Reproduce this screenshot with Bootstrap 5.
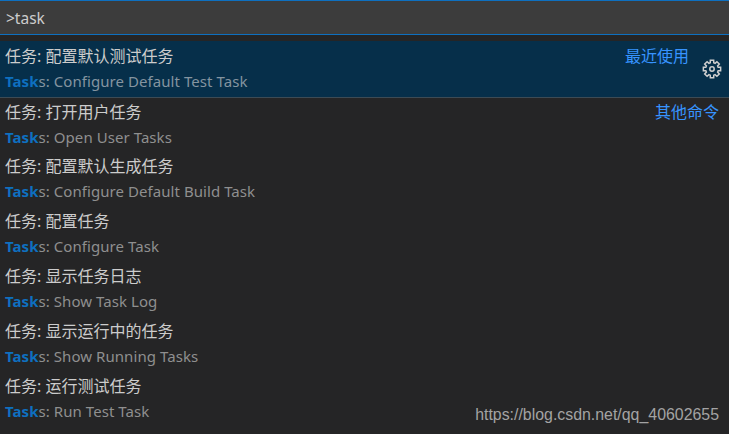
<!DOCTYPE html>
<html lang="zh-CN">
<head>
    <meta charset="UTF-8">
    <meta name="viewport" content="width=device-width, initial-scale=1.0">
    <title>Command Palette</title>
    <link href="https://cdn.jsdelivr.net/npm/bootstrap@5.3.0/dist/css/bootstrap.min.css" rel="stylesheet">
    <style>
        html, body {
            height: 100%;
            overflow: hidden;
        }
        body {
            background: #252526;
            font-family: "Noto Sans", "Noto Sans CJK SC", sans-serif;
            font-size: 15px;
        }
        .palette {
            height: 434px;
            position: relative;
        }
        .cmd-box {
            height: 35px;
            background: #3c3c3c;
            border-top: 1px solid #0e70c0;
            border-bottom: 1px solid #0e70c0;
            padding-left: 6px;
            color: #cccccc;
            font-size: 15.5px;
            line-height: 35px;
        }
        .cmd-gap {
            height: 6px;
        }
        .cmd-row {
            height: 55px;
            padding: 3px 10px 0 5px;
            color: #cccccc;
        }
        .cmd-row.is-active {
            height: 57px;
            background: #062f4a;
            border-bottom: 1px solid #3c4b55;
        }
        .cmd-row.is-next {
            height: 53px;
            padding-top: 2px;
        }
        .cmd-title {
            font-size: 16px;
            line-height: 25px;
            height: 25px;
        }
        .cmd-sub {
            line-height: 25px;
            height: 25px;
            color: #8f8f8f;
            letter-spacing: .06px;
        }
        .is-active .cmd-sub {
            color: #8494a0;
        }
        .cmd-hit {
            color: #0e70c0;
            font-weight: 700;
        }
        .cmd-group {
            color: #3794ff;
        }
        .is-active .cmd-group {
            padding-right: 30px;
        }
        .cmd-gear {
            position: absolute;
            right: 7px;
            top: 59px;
            width: 20px;
            height: 20px;
        }
        .watermark {
            position: absolute;
            right: 10px;
            bottom: 9px;
            color: #a3a3a3;
            font-family: "Liberation Sans", sans-serif;
            font-size: 15.9px;
            line-height: 20px;
        }
    </style>
</head>
<body>
    <div class="palette">
        <div class="cmd-box">&gt;task</div>
        <div class="cmd-gap"></div>

        <div class="cmd-row is-active d-flex justify-content-between">
            <div>
                <div class="cmd-title">任务: 配置默认测试任务</div>
                <div class="cmd-sub"><span class="cmd-hit">Task</span>s: Configure Default Test Task</div>
            </div>
            <div class="cmd-group cmd-title">最近使用</div>
        </div>

        <div class="cmd-row is-next d-flex justify-content-between">
            <div>
                <div class="cmd-title">任务: 打开用户任务</div>
                <div class="cmd-sub"><span class="cmd-hit">Task</span>s: Open User Tasks</div>
            </div>
            <div class="cmd-group cmd-title">其他命令</div>
        </div>
        <div class="cmd-row">
            <div class="cmd-title">任务: 配置默认生成任务</div>
            <div class="cmd-sub"><span class="cmd-hit">Task</span>s: Configure Default Build Task</div>
        </div>
        <div class="cmd-row">
            <div class="cmd-title">任务: 配置任务</div>
            <div class="cmd-sub"><span class="cmd-hit">Task</span>s: Configure Task</div>
        </div>
        <div class="cmd-row">
            <div class="cmd-title">任务: 显示任务日志</div>
            <div class="cmd-sub"><span class="cmd-hit">Task</span>s: Show Task Log</div>
        </div>
        <div class="cmd-row">
            <div class="cmd-title">任务: 显示运行中的任务</div>
            <div class="cmd-sub"><span class="cmd-hit">Task</span>s: Show Running Tasks</div>
        </div>
        <div class="cmd-row">
            <div class="cmd-title">任务: 运行测试任务</div>
            <div class="cmd-sub"><span class="cmd-hit">Task</span>s: Run Test Task</div>
        </div>

        <svg class="cmd-gear" viewBox="0 0 20 20" fill="none" stroke="#cfcfcf" stroke-width="1.5">
            <circle cx="10" cy="10" r="2.2"/>
            <path d="M8.32 1.36H11.68L11.76 3.85 13.1 4.4 14.92 2.7 17.3 5.08 15.6 6.9 16.15 8.24 18.64 8.32V11.68L16.15 11.76 15.6 13.1 17.3 14.92 14.92 17.3 13.1 15.6 11.76 16.15 11.68 18.64H8.32L8.24 16.15 6.9 15.6 5.08 17.3 2.7 14.92 4.4 13.1 3.85 11.76 1.36 11.68V8.32L3.85 8.24 4.4 6.9 2.7 5.08 5.08 2.7 6.9 4.4 8.24 3.85z"/>
        </svg>
        <div class="watermark">https://blog.csdn.net/qq_40602655</div>
    </div>
    <script src="https://cdn.jsdelivr.net/npm/bootstrap@5.3.0/dist/js/bootstrap.bundle.min.js"></script>
</body>
</html>
